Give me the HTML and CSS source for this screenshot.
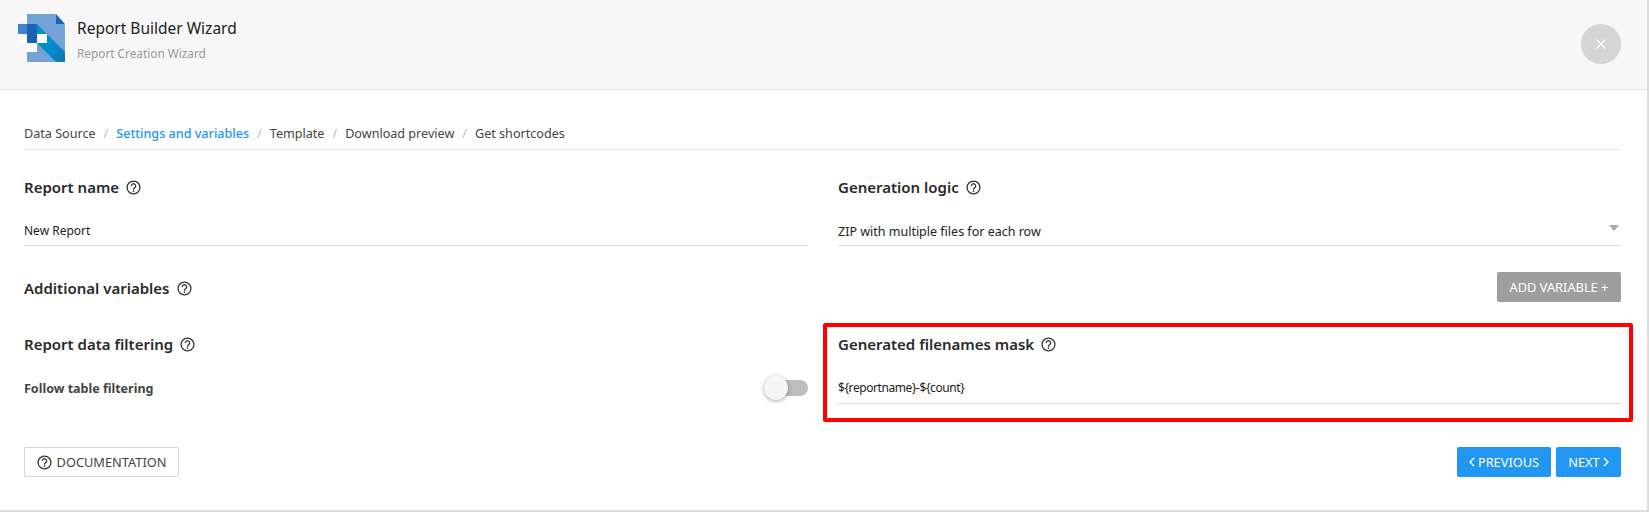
FILE: index.html
```html
<!DOCTYPE html>
<html lang="en">
<head>
<meta charset="utf-8">
<title>Report Builder Wizard</title>
<link rel="stylesheet" href="styles.css">
</head>
<body>
<div class="page">
  <header class="header">
    <svg class="logo" viewBox="0 0 48 48" width="48" height="48">
      <defs>
        <linearGradient id="band" x1="0.2" y1="0.2" x2="1" y2="1">
          <stop offset="0" stop-color="#0090cc"/>
          <stop offset=".65" stop-color="#0088c6"/>
          <stop offset="1" stop-color="#1f6fa3"/>
        </linearGradient>
      </defs>
      <path fill="#74a2d6" d="M9 0H37L47 11V48H9Z"/>
      <path fill="#1a63b5" d="M38 0L47 10H38Z"/>
      <path fill="#fff" d="M0 20H9V29H0ZM9 29H19V38H9Z"/>
      <path fill="url(#band)" d="M19 10L47 38V48H38L19 29Z"/>
      <path fill="#3c83cf" d="M0 10H9V20H0Z"/>
      <path fill="#1a63b5" d="M9 10H19V29H9Z"/>
      <path fill="#fff" d="M19 20H29V29H19Z"/>
    </svg>
    <div class="titles">
      <div class="title">Report Builder Wizard</div>
      <div class="subtitle">Report Creation Wizard</div>
    </div>
    <button class="close" type="button" aria-label="Close">
      <svg viewBox="0 0 10 10" width="10" height="10"><path d="M.5.5l9 9M9.500.5l-9 9" stroke="#fff" stroke-width="1.1" fill="none"/></svg>
    </button>
  </header>

  <main class="content">
    <nav class="crumbs">
      <span>Data Source</span><i>/</i>
      <span class="active">Settings and variables</span><i>/</i>
      <span>Template</span><i>/</i>
      <span>Download preview</span><i>/</i>
      <span>Get shortcodes</span>
    </nav>

    <div class="grid">
      <section class="field">
        <h3 class="label">Report name <svg class="help"><use href="#q"/></svg></h3>
        <div class="input short">New Report</div>
      </section>
      <section class="field">
        <h3 class="label">Generation logic <svg class="help"><use href="#q"/></svg></h3>
        <div class="input select">ZIP with multiple files for each row<span class="caret"></span></div>
      </section>
    </div>

    <div class="vars">
      <h3 class="label">Additional variables <svg class="help"><use href="#q"/></svg></h3>
      <button class="btn grey" type="button">ADD VARIABLE +</button>
    </div>

    <div class="grid lower">
      <section class="field">
        <h3 class="label">Report data filtering <svg class="help"><use href="#q"/></svg></h3>
        <div class="toggle-row">
          <b>Follow table filtering</b>
          <span class="toggle"><span class="knob"></span></span>
        </div>
      </section>
      <section class="field marked">
        <h3 class="label">Generated filenames mask <svg class="help"><use href="#q"/></svg></h3>
        <div class="input mask">${reportname}-${count}</div>
      </section>
    </div>

    <footer class="actions">
      <button class="btn outline" type="button"><svg class="help"><use href="#q"/></svg> DOCUMENTATION</button>
      <div class="nav-btns">
        <button class="btn blue" type="button"><svg class="chev" viewBox="0 0 6 10"><path d="M5 1L1 5l4 4"/></svg> PREVIOUS</button>
        <button class="btn blue" type="button">NEXT <svg class="chev" viewBox="0 0 6 10"><path d="M1 1l4 4-4 4"/></svg></button>
      </div>
    </footer>
  </main>
</div>
<svg width="0" height="0" class="defs">
  <symbol id="q" viewBox="0 0 14 14">
    <circle cx="7" cy="7" r="6" fill="none" stroke="currentColor" stroke-width="1.2"/>
    <path d="M5 5.500a2 2 0 1 1 3.200 1.600C7.400 7.700 7 8 7 9" fill="none" stroke="currentColor" stroke-width="1.2"/>
    <circle cx="7" cy="10.400" r=".75" fill="currentColor"/>
  </symbol>
</svg>
</body>
</html>
```
FILE: styles.css
```css
* { box-sizing: border-box; }
html, body { margin: 0; padding: 0; background: #fff; }
body { font-family: "Noto Sans", "Open Sans", sans-serif; color: #333; overflow: hidden; }
.defs { position: absolute; }

.page { width: 1649px; height: 512px; border-right: 2px solid #ddd; border-bottom: 2px solid #ddd; }

.header { height: 90px; background: #f7f7f7; border-bottom: 1px solid #e5e5e5; display: flex; align-items: flex-start; padding: 14px 26px 0 18px; }
.logo { flex: none; }
.titles { margin-left: 11px; flex: 1; }
.title { font-size: 15.5px; line-height: 20px; margin-top: 4px; color: #222; }
.subtitle { font-size: 11.8px; line-height: 18px; margin-top: 6px; color: #999; }
.close { width: 40px; height: 40px; border-radius: 50%; border: 0; background: #d5d5d5; margin: 10px 0 0; display: flex; align-items: center; justify-content: center; padding: 0; }

.content { padding: 0 26px 0 24px; }

.crumbs { height: 60px; padding-top: 34px; border-bottom: 1px solid #e5e5e5; font-size: 12.6px; line-height: 20px; color: #444; display: flex; }
.crumbs i { font-style: normal; color: #bbb; margin: 0 8px; }
.crumbs .active { color: #2196f3; font-weight: 500; }

.grid { display: grid; grid-template-columns: 784px 783px; column-gap: 30px; }
.label { margin: 0; font-size: 15px; line-height: 22px; font-weight: 600; color: #2a2a2a; display: flex; align-items: center; gap: 7px; }
.help { width: 15px; height: 15px; color: #333; flex: none; }

.grid .field { padding-top: 26px; }
.input { margin-top: 18px; height: 30px; border-bottom: 1px solid #ddd; font-size: 12.5px; line-height: 20px; padding-top: 6px; color: #222; position: relative; }
.short { font-size: 12px; padding-top: 5px; }
.mask { font-size: 12px; letter-spacing: -.42px; }
.caret { position: absolute; right: 2px; top: 9px; border: 5px solid transparent; border-top: 6px solid #aaa; border-bottom: 0; }

.vars { display: flex; justify-content: space-between; align-items: center; height: 30px; margin-top: 26px; }
.vars .label { margin-top: 2px; }
.btn { height: 30px; border-radius: 2px; border: 0; font: inherit; font-size: 12.8px; color: #fff; padding: 0 12px; display: inline-flex; align-items: center; gap: 3px; }
.grey { background: #9e9e9e; width: 124px; justify-content: center; padding: 0; }
.blue { background: #2196f3; justify-content: center; padding: 0; }
.blue:first-child { width: 94px; }
.blue:last-child { width: 65px; }
.outline { background: #fff; border: 1px solid #d5d5d5; color: #444; width: 155px; padding: 0; justify-content: center; gap: 5px; }
.chev { width: 6px; height: 10px; fill: none; stroke: #fff; stroke-width: 1.4; }

.grid.lower .field { padding-top: 31px; }
.toggle-row { display: flex; justify-content: space-between; align-items: center; height: 28px; margin-top: 19px; font-size: 12.5px; color: #444; }
.toggle { width: 44px; height: 16px; position: relative; display: block; }
.toggle::before { content: ""; position: absolute; left: 8px; right: 0; top: 0; height: 16px; background: #bdbdbd; border-radius: 8px; }
.knob { position: absolute; left: 0; top: -4px; width: 24px; height: 24px; border-radius: 50%; background: #f5f5f5; box-shadow: 0 1px 4px rgba(0,0,0,.35); }

.marked { position: relative; }
.marked .input { height: 32px; margin-top: 17px; }
.marked::after { content: ""; position: absolute; left: -15px; right: -12px; top: 21px; bottom: -18px; border: 4px solid #f00; border-radius: 2px; pointer-events: none; }

.actions { display: flex; justify-content: space-between; margin-top: 43px; }
.nav-btns { display: flex; gap: 5px; }
```
